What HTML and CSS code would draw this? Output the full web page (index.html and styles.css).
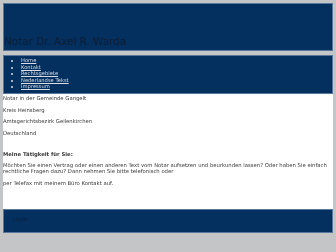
FILE: index.html
```html
<!DOCTYPE html>
<html lang="de">
<head>
  <meta charset="UTF-8"/>
  <title>Notar Dr. Axel R. Warda</title>
  <link rel="stylesheet" href="styles.css">
</head>
<body>
<div class="page">
  <header class="top"><h1>Notar Dr. Axel R. Warda</h1></header>

  <nav class="menu">
    <ul>
      <li><a href="#">Home</a></li>
      <li><a href="#">Kontakt</a></li>
      <li><a href="#">Rechtsgebiete</a></li>
      <li><a href="#">Nederlandse Tekst</a></li>
      <li><a href="#">Impressum</a></li>
    </ul>
  </nav>

  <main class="content">
    <p>Notar in der Gemeinde Gangelt</p>
    <p>Kreis Heinsberg</p>
    <p>Amtsgerichtsbezirk Geilenkirchen</p>
    <p>Deutschland</p>
    <p class="gap"><b>Meine Tätigkeit für Sie:</b></p>
    <p>Möchten Sie einen Vertrag oder einen anderen Text vom Notar aufsetzen und beurkunden lassen? Oder haben Sie einfach rechtliche Fragen dazu? Dann nehmen Sie bitte telefonisch oder</p>
    <p>per Telefax mit meinem Büro Kontakt auf.</p>
  </main>

  <footer class="bottom"><a href="#">Login</a></footer>
</div>
</body>
</html>
```

FILE: styles.css
```css
:root{--navy:#03305f;--edge:#58779a;--grey:#c4c5c7;--ink:#3a3a3a}
body{margin:0;background:var(--grey);font-family:"DejaVu Sans",Verdana,sans-serif;color:var(--ink)}
.page{padding:3px 3px 0;will-change:transform}
.top{height:46px;background:var(--navy);border:1px solid var(--edge);display:flex;align-items:flex-end}
.top h1{margin:0 0 3px;font-size:10.4px;font-weight:normal;color:#0c1d36;line-height:12px}
.menu{margin-top:4px;background:var(--navy);border:1px solid var(--edge);height:37px}
.menu ul{margin:0;padding:1px 0 0 17px;font-size:5.2px;line-height:6.6px;color:#d7dee8}
.menu a{color:#d7dee8}
.content{background:#fff;padding:1px 0 18px;font-size:5.3px;line-height:6px}
.content p{margin:0 0 5.5px}
.content .gap{margin-top:15px}
.bottom{background:var(--navy);border:1px solid var(--edge);height:22px;padding:0 0 0 9px;font-size:5.3px;line-height:18px}
.bottom a{color:#0c1d36;text-decoration:none}
```
